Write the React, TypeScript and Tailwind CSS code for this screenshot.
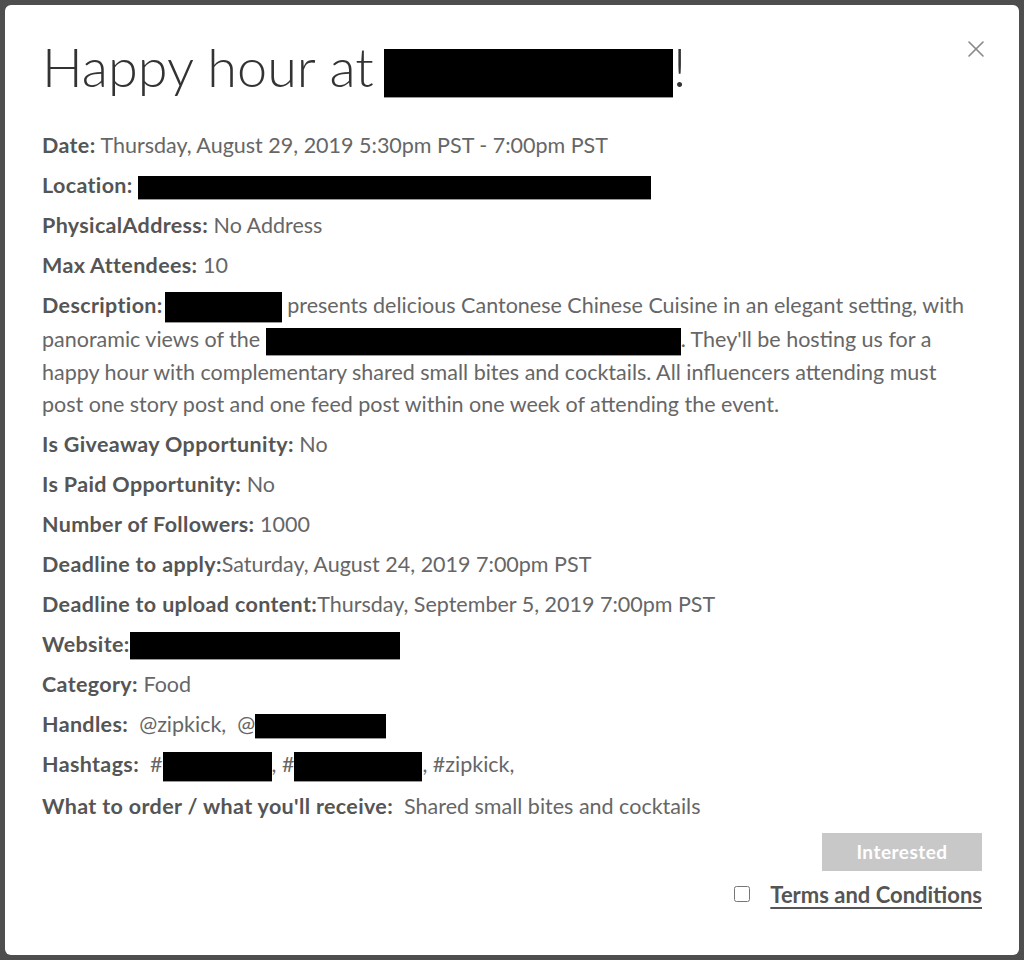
import { X } from "lucide-react";

function Redact({ w, h = 26 }: { w: number; h?: number }) {
  return (
    <span
      className="inline-block bg-black align-middle border-b border-[#999]"
      style={{ width: w, height: h }}
    />
  );
}

function Row({ label, children }: { label: string; children?: React.ReactNode }) {
  return (
    <p className="mb-2 leading-8">
      <b className="font-bold tracking-[0.35px] text-[#555]">{label}</b>
      {children}
    </p>
  );
}

export default function App() {
  return (
    <div className="min-h-[960px] bg-[#4e4e4e] p-[5px] font-['Lato','Open_Sans',sans-serif]">
      <div className="relative h-[950px] rounded-md bg-white pl-[37px] pr-[37px] pt-[28px] text-[21.5px] text-[#666]">
        <button className="absolute right-[29px] top-[30px] text-[#888]">
          <X size={28} strokeWidth={1.4} />
        </button>

        <h1 className="mb-[28px] text-[54px] font-light leading-[68px] text-[#333]">
          Happy hour at
          <span className="ml-[10px]">
            <Redact w={289} h={49} />
          </span>
          !
        </h1>

        <Row label="Date:"> Thursday, August 29, 2019 5:30pm PST - 7:00pm PST</Row>
        <Row label="Location:">
          {" "}
          <Redact w={513} h={24} />
        </Row>
        <Row label="PhysicalAddress:"> No Address</Row>
        <Row label="Max Attendees:"> 10</Row>
        <Row label="Description:">
          <span className="ml-[2px]" />
          <Redact w={117} h={31} /> presents delicious Cantonese Chinese Cuisine in an elegant
          setting, with panoramic views of the <Redact w={415} h={28} />. They'll be hosting us
          for a happy hour with complementary shared small bites and cocktails. All influencers
          attending must post one story post and one feed post within one week of attending the
          event.
        </Row>
        <Row label="Is Giveaway Opportunity:"> No</Row>
        <Row label="Is Paid Opportunity:"> No</Row>
        <Row label="Number of Followers:"> 1000</Row>
        <Row label="Deadline to apply:">Saturday, August 24, 2019 7:00pm PST</Row>
        <Row label="Deadline to upload content:">Thursday, September 5, 2019 7:00pm PST</Row>
        <Row label="Website:">
          <Redact w={270} h={28} />
        </Row>
        <Row label="Category:"> Food</Row>
        <Row label="Handles:">
          {"\u00a0\u00a0"}@zipkick,{"\u00a0\u00a0"}@<Redact w={131} h={25} />
        </Row>
        <Row label="Hashtags:">
          {"\u00a0\u00a0"}#<Redact w={109} h={30} />,{"\u00a0"}#<Redact w={128} h={30} />,
          {" "}#zipkick,
        </Row>
        <Row label="What to order / what you'll receive:">
          {"\u00a0\u00a0"}Shared small bites and cocktails
        </Row>

        <div className="mt-[11px] flex flex-col items-end">
          <button className="h-[38px] w-[160px] bg-[#c8c8c8] text-[19px] font-bold tracking-wide text-white">
            Interested
          </button>
          <label className="mt-[7px] flex items-center">
            <input
              type="checkbox"
              className="h-[16px] w-[16px] rounded border border-[#999] accent-[#888]"
            />
            <span className="ml-[20px] text-[22px] font-bold text-[#555] underline underline-offset-4">
              Terms and Conditions
            </span>
          </label>
        </div>
      </div>
    </div>
  );
}
